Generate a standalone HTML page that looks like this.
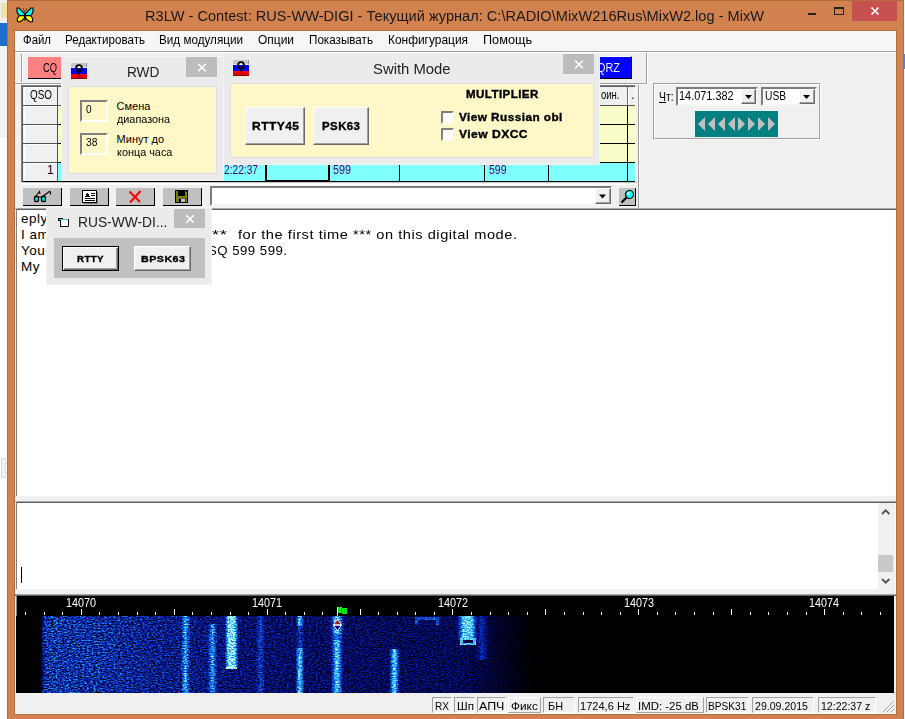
<!DOCTYPE html>
<html><head><meta charset="utf-8">
<style>
*{box-sizing:border-box;margin:0;padding:0}
html,body{width:905px;height:719px;overflow:hidden;background:#fff;font-family:"Liberation Sans",sans-serif;font-size:11px;color:#000}
.a{position:absolute}
.t{position:absolute;white-space:pre;line-height:1}
.btn3d{background:#C0C0C0;border:solid #000;border-width:0 1px 1px 0}
.dlg{background:#EBEBEB;border:1px solid #F3F3F3}
.yel{background:#FEF8C8;box-shadow:0 0 0 1px #DEDEE0}
.xbtn{background:#BCBCBC}
.pbtn{background:#F0F0F0;border:1px solid;border-color:#fff #696969 #696969 #fff;box-shadow:inset -1px -1px 0 #A0A0A0}
.edit{border:2px solid;border-color:#808080 #fff #fff #808080;background:#FEF8C8}
.sb{top:697px;height:16px;border:1px solid;border-color:#A0A0A0 #fff #fff #A0A0A0}
.sbr{top:697px;height:16px;border:1px solid;border-color:#fff #A0A0A0 #A0A0A0 #fff}
.cmb{background:#fff;border:2px solid;border-color:#7C7C7C #F4F4F4 #F4F4F4 #7C7C7C}
.dd{background:#F0F0F0;border:1px solid;border-color:#fff #696969 #696969 #fff;box-shadow:inset -1px -1px 0 #A0A0A0}
</style></head><body>
<div class="a" style="left:0px;top:0px;width:7px;height:719px;background:#fff"></div>
<div class="a" style="left:0px;top:46px;width:7px;height:92px;background:#F1F2F4"></div>
<div class="a" style="left:1px;top:458px;width:5px;height:20px;background:#F2F2F2;border:1px solid #DCDCDC"></div>
<div class="a" style="left:0px;top:0px;width:7px;height:23px;background:#EEF0F2"></div>
<div class="a" style="left:1px;top:3px;width:6px;height:15px;background:#F3E3A0"></div>
<div class="a" style="left:0px;top:23px;width:7px;height:23px;background:#1E6FCB"></div>
<div class="a" style="left:904px;top:0px;width:1px;height:719px;background:#F4F5F9"></div>
<div class="a" style="left:904px;top:54px;width:1px;height:15px;background:#3A8DE0"></div>
<div class="a" style="left:7px;top:0px;width:897px;height:719px;background:#D2824E"></div>
<div class="a" style="left:7px;top:0px;width:897px;height:1px;background:#B26C3E"></div>
<div class="a" style="left:903px;top:0px;width:1px;height:719px;background:#B26C3E"></div>
<div class="a" style="left:7px;top:0px;width:1px;height:719px;background:#B26C3E"></div>
<svg class="a" style="left:16px;top:7px" width="18" height="16"><g stroke="#000" stroke-width="1.100" stroke-linejoin="miter"><path d="M1 1 L3 1 L8.5 6.5 L8.5 8.600 L3.5 8.600 L2 7 L1 5 Z" fill="#00FFFF"/><path d="M17 1 L15 1 L9.5 6.5 L9.5 8.600 L14.5 8.600 L16 7 L17 5 Z" fill="#00FFFF"/><path d="M3.5 8.600 L8.5 8.600 L8.5 10.5 L6 13.5 L3.5 15 L1.5 14.5 L1.300 11.5 Z" fill="#FFFF00"/><path d="M14.5 8.600 L9.5 8.600 L9.5 10.5 L12 13.5 L14.5 15 L16.5 14.5 L16.7 11.5 Z" fill="#FFFF00"/></g><rect x="8.300" y="6" width="1.400" height="7.5" fill="#000"/><rect x="7" y="1.5" width="1" height="1" fill="#000"/><rect x="10" y="1.5" width="1" height="1" fill="#000"/><rect x="8.5" y="3.2" width="1" height="1.300" fill="#000"/></svg>
<div class="t" style="left:145.00px;top:9.00px;font-size:14.7px;color:#1a1a1a;transform:scaleX(0.9931);transform-origin:0 0;">R3LW - Contest: RUS-WW-DIGI - Текущий журнал: C:\RADIO\MixW216Rus\MixW2.log - MixW</div>
<div class="a" style="left:852px;top:1px;width:45px;height:20px;background:#C75050"></div>
<svg class="a" style="left:852px;top:1px" width="45" height="20"><path d="M19.5 6.5 L26.5 13.5 M26.5 6.5 L19.5 13.5" stroke="#fff" stroke-width="1.7" fill="none"/></svg>
<div class="a" style="left:808px;top:13px;width:8px;height:2px;background:#222"></div>
<div class="a" style="left:834px;top:7px;width:10px;height:8px;border:1px solid #222;border-top-width:2px"></div>
<div class="a" style="left:14px;top:30px;width:883px;height:685px;border:1px solid #B46E3E"></div>
<div class="a" style="left:15px;top:31px;width:881px;height:683px;background:#F0F0F0"></div>
<div class="a" style="left:15px;top:713px;width:881px;height:1px;background:#FAFAFA"></div>
<div class="a" style="left:15px;top:31px;width:881px;height:20px;background:#F5F6F7"></div>
<div class="a" style="left:15px;top:51px;width:881px;height:1px;background:#A0A0A0"></div>
<div class="a" style="left:15px;top:52px;width:881px;height:1px;background:#fff"></div>
<div class="t" style="left:22.50px;top:34.00px;font-size:12px;transform:scaleX(0.9487);transform-origin:0 0;">Файл</div>
<div class="t" style="left:65.00px;top:34.00px;font-size:12px;transform:scaleX(0.9649);transform-origin:0 0;">Редактировать</div>
<div class="t" style="left:159.00px;top:34.00px;font-size:12px;transform:scaleX(0.9741);transform-origin:0 0;">Вид модуляции</div>
<div class="t" style="left:258.00px;top:34.00px;font-size:12px;transform:scaleX(0.9965);transform-origin:0 0;">Опции</div>
<div class="t" style="left:309.00px;top:34.00px;font-size:12px;transform:scaleX(0.9713);transform-origin:0 0;">Показывать</div>
<div class="t" style="left:388.00px;top:34.00px;font-size:12px;transform:scaleX(0.9934);transform-origin:0 0;">Конфигурация</div>
<div class="t" style="left:483.00px;top:34.00px;font-size:12px;transform:scaleX(1.0570);transform-origin:0 0;">Помощь</div>
<div class="a" style="left:21px;top:54px;width:1px;height:28px;background:#A0A0A0"></div>
<div class="a" style="left:22px;top:54px;width:1px;height:28px;background:#fff"></div>
<div class="a" style="left:15px;top:83px;width:632px;height:1px;background:#A0A0A0"></div>
<div class="a" style="left:15px;top:84px;width:632px;height:1px;background:#fff"></div>
<div class="a" style="left:646px;top:53px;width:1px;height:31px;background:#A0A0A0"></div>
<div class="a" style="left:647px;top:53px;width:1px;height:31px;background:#fff"></div>
<div class="a" style="left:28px;top:57px;width:40px;height:22px;background:#FF8080;border-bottom:1px solid #000"></div>
<div class="t" style="left:42.70px;top:62.00px;font-size:12.5px;transform:scaleX(0.7467);transform-origin:0 0;">CQ</div>
<div class="a" style="left:590px;top:56px;width:42px;height:23px;background:#0000FF;border:1px solid;border-color:#fff #000 #000 #fff"></div>
<div class="t" style="left:597.00px;top:62.00px;font-size:12.5px;color:#E8E8FF;transform:scaleX(0.8715);transform-origin:0 0;">QRZ</div>
<div class="a" style="left:21px;top:85px;width:615px;height:99px;border:1px solid;border-color:#808080 #fff #fff #808080"></div>
<div class="a" style="left:22px;top:86px;width:613px;height:96px;background:#F8FCC8;border-top:1px solid #606060;border-left:1px solid #606060"></div>
<div class="a" style="left:23px;top:87px;width:612px;height:19px;background:#F0F0F0"></div>
<div class="a" style="left:23px;top:87px;width:35px;height:94px;background:#F0F0F0;border-right:1px solid #505050"></div>
<div class="a" style="left:23px;top:105px;width:612px;height:1px;background:#505050"></div>
<div class="a" style="left:23px;top:124px;width:35px;height:1px;background:#505050"></div>
<div class="a" style="left:58px;top:124px;width:577px;height:1px;background:#000"></div>
<div class="a" style="left:23px;top:143px;width:35px;height:1px;background:#505050"></div>
<div class="a" style="left:58px;top:143px;width:577px;height:1px;background:#000"></div>
<div class="a" style="left:23px;top:162px;width:35px;height:1px;background:#505050"></div>
<div class="a" style="left:58px;top:162px;width:577px;height:1px;background:#000"></div>
<div class="a" style="left:58px;top:163px;width:577px;height:18px;background:#80FFFF"></div>
<div class="a" style="left:23px;top:181px;width:612px;height:1px;background:#000"></div>
<div class="a" style="left:21px;top:182px;width:616px;height:1px;background:#C8C8C8"></div>
<div class="a" style="left:21px;top:183px;width:616px;height:2px;background:#fff"></div>
<div class="a" style="left:24px;top:88px;width:1px;height:17px;background:#fff"></div>
<div class="a" style="left:24px;top:87px;width:33px;height:1px;background:#fff"></div>
<div class="a" style="left:24px;top:106px;width:33px;height:1px;background:#fff"></div>
<div class="a" style="left:24px;top:106px;width:1px;height:18px;background:#fff"></div>
<div class="a" style="left:24px;top:125px;width:33px;height:1px;background:#fff"></div>
<div class="a" style="left:24px;top:125px;width:1px;height:18px;background:#fff"></div>
<div class="a" style="left:24px;top:144px;width:33px;height:1px;background:#fff"></div>
<div class="a" style="left:24px;top:144px;width:1px;height:18px;background:#fff"></div>
<div class="a" style="left:24px;top:163px;width:33px;height:1px;background:#fff"></div>
<div class="a" style="left:24px;top:163px;width:1px;height:18px;background:#fff"></div>
<div class="t" style="left:30.30px;top:89.00px;font-size:12px;transform:scaleX(0.8248);transform-origin:0 0;">QSO</div>
<div class="t" style="left:47.00px;top:164.00px;font-size:12px;">1</div>
<div class="a" style="left:627px;top:87px;width:1px;height:19px;background:#707070"></div>
<div class="a" style="left:627px;top:106px;width:1px;height:75px;background:#000"></div>
<div class="a" style="left:628px;top:87px;width:1px;height:18px;background:#fff"></div>
<div class="a" style="left:265px;top:163px;width:2px;height:19px;background:#000"></div>
<div class="a" style="left:328px;top:163px;width:2px;height:19px;background:#000"></div>
<div class="a" style="left:265px;top:180px;width:65px;height:2px;background:#000"></div>
<div class="a" style="left:399px;top:163px;width:1px;height:18px;background:#000"></div>
<div class="a" style="left:484px;top:163px;width:1px;height:18px;background:#000"></div>
<div class="a" style="left:548px;top:163px;width:1px;height:18px;background:#000"></div>
<div class="t" style="left:224.00px;top:164.00px;font-size:12px;color:#4B0082;transform:scaleX(0.8490);transform-origin:0 0;">2:22:37</div>
<div class="t" style="left:333.40px;top:164.00px;font-size:12px;color:#4B0082;transform:scaleX(0.8986);transform-origin:0 0;">599</div>
<div class="t" style="left:488.80px;top:164.00px;font-size:12px;color:#4B0082;transform:scaleX(0.8736);transform-origin:0 0;">599</div>
<div class="t" style="left:601.00px;top:89.00px;font-size:12px;transform:scaleX(0.7925);transform-origin:0 0;">оин.</div>
<div class="t" style="left:631.00px;top:89.00px;font-size:12px;">.</div>
<div class="a" style="left:638px;top:85px;width:1px;height:123px;background:#A0A0A0"></div>
<div class="a" style="left:639px;top:85px;width:1px;height:123px;background:#fff"></div>
<div class="a btn3d" style="left:23px;top:188px;width:39px;height:18px;"></div>
<div class="a btn3d" style="left:70px;top:188px;width:39px;height:18px;"></div>
<div class="a btn3d" style="left:116px;top:188px;width:39px;height:18px;"></div>
<div class="a btn3d" style="left:163px;top:188px;width:39px;height:18px;"></div>
<svg class="a" style="left:33px;top:190px" width="20" height="13"><path d="M2.5 6.5 L6.5 1.5 L7 4 M9.5 6.5 L16.5 1.5 L17.5 2 L17.5 4.5" stroke="#000" fill="none" stroke-width="1.100"/><rect x="1.5" y="6.5" width="4" height="5" rx="1.2" fill="#00E8E8" stroke="#000" stroke-width="1.300"/><rect x="8.5" y="6.5" width="4" height="5" rx="1.2" fill="#00E8E8" stroke="#000" stroke-width="1.300"/><path d="M5.5 7h3" stroke="#000"/></svg>
<svg class="a" style="left:82px;top:190px" width="17" height="14" shape-rendering="crispEdges"><rect x="0.5" y="0.5" width="14" height="12" fill="#fff" stroke="#000"/><path d="M15.5 2v12M2 13.5h14" stroke="#808080"/><path d="M9 3.5h4M9 5.5h4M3 8.5h10M3 10.5h10" stroke="#000"/><path d="M3 7l2.5-4.5 2.5 4.5z" fill="#000"/></svg>
<svg class="a" style="left:128px;top:190px" width="15" height="14"><path d="M1.5 1.5 L12 12 M12.5 1 L8 6 L2 12.5" stroke="#FF0000" stroke-width="2" fill="none"/></svg>
<svg class="a" style="left:175px;top:190px" width="14" height="14" shape-rendering="crispEdges"><rect x="0.5" y="0.5" width="12" height="12" fill="#808000" stroke="#000"/><rect x="3" y="1" width="7" height="5" fill="#000"/><rect x="3" y="8" width="7" height="4" fill="#C0C0C0" stroke="#000" stroke-width=".5"/><rect x="4" y="9" width="2" height="3" fill="#000"/><rect x="11" y="1" width="1" height="1" fill="#000"/></svg>
<div class="a cmb" style="left:210px;top:186px;width:402px;height:20px;"></div>
<div class="a dd" style="left:595px;top:188px;width:16px;height:16px;"></div>
<svg class="a" style="left:595px;top:188px" width="16" height="16"><path d="M4 6.5 h7 l-3.5 4z" fill="#000"/></svg>
<div class="a btn3d" style="left:619px;top:188px;width:17px;height:18px;"></div>
<svg class="a" style="left:620px;top:189px" width="15" height="16"><circle cx="9.5" cy="5.5" r="4" fill="#00FFFF" stroke="#000" stroke-width="1.2"/><circle cx="8.5" cy="4.5" r="1.5" fill="#C0FFFF"/><path d="M6.5 8.5 L1.5 13.5" stroke="#000" stroke-width="2.2"/></svg>
<div class="a" style="left:15px;top:208px;width:881px;height:1px;background:#A8A8A8"></div>
<div class="a dlg" style="left:61px;top:56px;width:163px;height:125px;"></div>
<svg class="a" style="left:71px;top:63px" width="16" height="16"><g shape-rendering="crispEdges"><rect width="16" height="5" fill="#C6C6C6"/><rect x="15" width="1" height="4" fill="#909090"/><rect y="4" width="16" height="1" fill="#E4E4D0"/><rect y="5" width="16" height="6" fill="#0000FF"/><rect y="11" width="16" height="5" fill="#FF0000"/><rect y="15" width="16" height="1" fill="#800000"/></g><ellipse cx="8" cy="3.8" rx="1.7" ry="1" fill="#fff"/><circle cx="8" cy="5" r="2.900" fill="none" stroke="#000" stroke-width="1.900"/><path d="M4.7 6.5 Q8 10.5 11.300 6.5 L11 8 L9 9.300 L9 11.5 L7 11.5 L7 9.300 L5 8 Z" fill="#000"/><g fill="#300"><rect x="5" y="13" width="1" height="1"/><rect x="7.5" y="13" width="1.5" height="1"/><rect x="10.5" y="13" width="1" height="1"/></g><path d="M4 12l3 3M7 12l-3 3M9.5 12l3 3M12.5 12l-3 3" stroke="#A00000" stroke-width=".7"/></svg>
<div class="t" style="left:126.60px;top:64.00px;font-size:15px;color:#222;transform:scaleX(0.9111);transform-origin:0 0;">RWD</div>
<div class="a xbtn" style="left:186px;top:57px;width:31px;height:20px;"></div>
<svg class="a" style="left:0;top:0" width="905" height="300"><path d="M198.2 63.7 l7.600 7.600 m0 -7.600 l-7.600 7.600" stroke="#fff" stroke-width="1.600" fill="none"/></svg>
<div class="a yel" style="left:69px;top:87px;width:147px;height:86px;"></div>
<div class="a edit" style="left:80px;top:100px;width:28px;height:22px;"></div>
<div class="a edit" style="left:80px;top:133px;width:28px;height:22px;"></div>
<div class="t" style="left:85.60px;top:105.00px;font-size:10px;transform:scaleX(1.0067);transform-origin:0 0;">0</div>
<div class="t" style="left:85.60px;top:138.00px;font-size:10px;transform:scaleX(1.0247);transform-origin:0 0;">38</div>
<div class="t" style="left:116.60px;top:101.00px;font-size:11px;">Смена</div>
<div class="t" style="left:116.60px;top:114.00px;font-size:11px;transform:scaleX(0.9838);transform-origin:0 0;">диапазона</div>
<div class="t" style="left:116.60px;top:134.00px;font-size:11px;">Минут до</div>
<div class="t" style="left:116.60px;top:147.00px;font-size:11px;transform:scaleX(0.9879);transform-origin:0 0;">конца часа</div>
<div class="a dlg" style="left:223px;top:53px;width:377px;height:112px;"></div>
<svg class="a" style="left:233px;top:60px" width="16" height="16"><g shape-rendering="crispEdges"><rect width="16" height="5" fill="#C6C6C6"/><rect x="15" width="1" height="4" fill="#909090"/><rect y="4" width="16" height="1" fill="#E4E4D0"/><rect y="5" width="16" height="6" fill="#0000FF"/><rect y="11" width="16" height="5" fill="#FF0000"/><rect y="15" width="16" height="1" fill="#800000"/></g><ellipse cx="8" cy="3.8" rx="1.7" ry="1" fill="#fff"/><circle cx="8" cy="5" r="2.900" fill="none" stroke="#000" stroke-width="1.900"/><path d="M4.7 6.5 Q8 10.5 11.300 6.5 L11 8 L9 9.300 L9 11.5 L7 11.5 L7 9.300 L5 8 Z" fill="#000"/><g fill="#300"><rect x="5" y="13" width="1" height="1"/><rect x="7.5" y="13" width="1.5" height="1"/><rect x="10.5" y="13" width="1" height="1"/></g><path d="M4 12l3 3M7 12l-3 3M9.5 12l3 3M12.5 12l-3 3" stroke="#A00000" stroke-width=".7"/></svg>
<div class="t" style="left:373.00px;top:61.00px;font-size:15px;color:#222;transform:scaleX(0.9901);transform-origin:0 0;">Swith Mode</div>
<div class="a xbtn" style="left:563px;top:54px;width:31px;height:20px;"></div>
<svg class="a" style="left:0;top:0" width="905" height="300"><path d="M575.2 60.7 l7.600 7.600 m0 -7.600 l-7.600 7.600" stroke="#fff" stroke-width="1.600" fill="none"/></svg>
<div class="a yel" style="left:231px;top:84px;width:362px;height:73px;"></div>
<div class="a pbtn" style="left:245px;top:107px;width:60px;height:38px;"></div>
<div class="a pbtn" style="left:313px;top:107px;width:56px;height:38px;"></div>
<div class="t" style="left:251.60px;top:121.00px;font-size:10.5px;font-weight:700;letter-spacing:0.4px;transform:scaleX(1.1436);transform-origin:0 0;-webkit-text-stroke:.35px #000;">RTTY45</div>
<div class="t" style="left:321.70px;top:121.00px;font-size:10.5px;font-weight:700;letter-spacing:0.4px;transform:scaleX(1.0894);transform-origin:0 0;-webkit-text-stroke:.35px #000;">PSK63</div>
<div class="t" style="left:465.70px;top:89.00px;font-size:10.5px;font-weight:700;letter-spacing:0.4px;transform:scaleX(1.0985);transform-origin:0 0;-webkit-text-stroke:.35px #000;">MULTIPLIER</div>
<div class="a" style="left:441px;top:111px;width:13px;height:13px;background:#fff;border:2px solid;border-color:#808080 #FAFAF4 #FAFAF4 #808080"></div>
<div class="a" style="left:441px;top:128px;width:13px;height:13px;background:#fff;border:2px solid;border-color:#808080 #FAFAF4 #FAFAF4 #808080"></div>
<div class="t" style="left:459.40px;top:112.00px;font-size:10.5px;font-weight:700;letter-spacing:0.4px;transform:scaleX(1.1207);transform-origin:0 0;-webkit-text-stroke:.35px #000;">View Russian obl</div>
<div class="t" style="left:459.40px;top:129.00px;font-size:10.5px;font-weight:700;letter-spacing:0.4px;transform:scaleX(1.1507);transform-origin:0 0;-webkit-text-stroke:.35px #000;">View DXCC</div>
<div class="a" style="left:653px;top:83px;width:168px;height:57px;border:1px solid;border-color:#A0A0A0 #fff #fff #A0A0A0"></div>
<div class="a" style="left:654px;top:84px;width:166px;height:55px;border:1px solid;border-color:#fff #A0A0A0 #A0A0A0 #fff"></div>
<div class="t" style="left:658.60px;top:91.00px;font-size:12px;transform:scaleX(0.8668);transform-origin:0 0;"><u>Ч</u>т:</div>
<div class="a cmb" style="left:676px;top:87px;width:82px;height:19px;"></div>
<div class="t" style="left:679.30px;top:90.00px;font-size:12.5px;transform:scaleX(0.8727);transform-origin:0 0;">14.071.382</div>
<div class="a dd" style="left:741px;top:89px;width:15px;height:15px;"></div>
<svg class="a" style="left:741px;top:89px" width="15" height="15"><path d="M4 6 h7 l-3.5 4z" fill="#000"/></svg>
<div class="a cmb" style="left:761px;top:87px;width:56px;height:19px;"></div>
<div class="t" style="left:765.30px;top:90.00px;font-size:12.5px;transform:scaleX(0.8170);transform-origin:0 0;">USB</div>
<div class="a dd" style="left:799px;top:89px;width:16px;height:15px;"></div>
<svg class="a" style="left:799px;top:89px" width="16" height="15"><path d="M4 6 h7 l-3.5 4z" fill="#000"/></svg>
<div class="a" style="left:695px;top:111px;width:83px;height:26px;background:#008080"></div>
<svg class="a" style="left:695px;top:111px" width="83" height="26"><g fill="#C0C0C0"><path d="M10 6v14l-7-7z"/><path d="M20 6v14l-7-7z"/><path d="M30 6v14l-7-7z"/><path d="M40 6v14l-7-7z"/><path d="M43 6v14l7-7z"/><path d="M53 6v14l7-7z"/><path d="M63 6v14l7-7z"/><path d="M73 6v14l7-7z"/></g></svg>
<div class="a" style="left:15px;top:209px;width:881px;height:287px;background:#fff;border-top:1px solid #606060"></div>
<div class="a" style="left:15px;top:209px;width:1px;height:287px;background:#F4F4F4"></div>
<div class="a" style="left:16px;top:209px;width:1px;height:287px;background:#808080"></div>
<div class="t" style="left:21.00px;top:212.00px;font-size:13.5px;letter-spacing:0.5px;">eply</div>
<div class="t" style="left:21.00px;top:228.00px;font-size:13.5px;letter-spacing:0.5px;">I am</div>
<div class="t" style="left:21.00px;top:244.00px;font-size:13.5px;letter-spacing:0.5px;">You</div>
<div class="t" style="left:21.00px;top:260.00px;font-size:13.5px;letter-spacing:0.5px;">My</div>
<div class="t" style="left:211.50px;top:228.00px;font-size:13.5px;letter-spacing:0.5px;transform:scaleX(1.3617);transform-origin:0 0;">**</div>
<div class="t" style="left:238.00px;top:228.00px;font-size:13.5px;letter-spacing:0.5px;transform:scaleX(1.0820);transform-origin:0 0;">for the first time *** on this digital mode.</div>
<div class="t" style="left:208.00px;top:244.00px;font-size:13.5px;letter-spacing:0.5px;transform:scaleX(0.9776);transform-origin:0 0;">SQ 599 599.</div>
<div class="a dlg" style="left:46px;top:207px;width:166px;height:78px;"></div>
<svg class="a" style="left:57px;top:216px" width="14" height="13" shape-rendering="crispEdges"><path d="M1.5 2.5h4v1h6v7h-8v-6h-2z" fill="#fff" stroke="#111" stroke-width="1"/><rect x="2" y="3" width="9" height="1" fill="#30C8E8"/><path d="M11 9l2 1-2 1z" fill="#333"/></svg>
<div class="t" style="left:77.70px;top:214.00px;font-size:15px;color:#222;transform:scaleX(0.9196);transform-origin:0 0;">RUS-WW-DI...</div>
<div class="a xbtn" style="left:174px;top:209px;width:31px;height:19px;"></div>
<svg class="a" style="left:0;top:0" width="905" height="300"><path d="M186.2 215.2 l7.600 7.600 m0 -7.600 l-7.600 7.600" stroke="#fff" stroke-width="1.600" fill="none"/></svg>
<div class="a" style="left:54px;top:238px;width:151px;height:40px;background:#C0C0C0"></div>
<div class="a pbtn" style="left:62px;top:246px;width:57px;height:25px;border:1px solid #000;box-shadow:inset 1px 1px 0 #fff,inset -1px -1px 0 #696969,inset -2px -2px 0 #A0A0A0"></div>
<div class="a pbtn" style="left:134px;top:246px;width:57px;height:25px;"></div>
<div class="t" style="left:76.70px;top:254.00px;font-size:9.5px;font-weight:700;letter-spacing:0.4px;transform:scaleX(1.0190);transform-origin:0 0;-webkit-text-stroke:.35px #000;">RTTY</div>
<div class="t" style="left:140.70px;top:254.00px;font-size:9.5px;font-weight:700;letter-spacing:0.4px;transform:scaleX(1.1289);transform-origin:0 0;-webkit-text-stroke:.35px #000;">BPSK63</div>
<div class="a" style="left:15px;top:501px;width:881px;height:1px;background:#A8A8A8"></div>
<div class="a" style="left:15px;top:502px;width:881px;height:87px;background:#fff;border-top:1px solid #606060"></div>
<div class="a" style="left:15px;top:502px;width:1px;height:87px;background:#F4F4F4"></div>
<div class="a" style="left:16px;top:502px;width:1px;height:87px;background:#808080"></div>
<div class="a" style="left:21px;top:567px;width:1px;height:16px;background:#000"></div>
<div class="a" style="left:878px;top:503px;width:17px;height:86px;background:#F0F0F0"></div>
<div class="a" style="left:878px;top:555px;width:15px;height:17px;background:#C9C9C9"></div>
<svg class="a" style="left:878px;top:503px" width="17" height="86"><path d="M4 11l3.7-3.7 3.7 3.7M4 76l3.7 3.7 3.7-3.7" stroke="#555" stroke-width="1.900" fill="none"/></svg>
<div class="a" style="left:15px;top:594px;width:881px;height:1px;background:#A8A8A8"></div>
<div class="a" style="left:15px;top:595px;width:881px;height:1px;background:#606060"></div>
<div class="a" style="left:16px;top:595px;width:1px;height:98px;background:#808890"></div>
<div class="a" style="left:17px;top:596px;width:877px;height:97px;background:#000"></div>
<svg class="a" style="left:16px;top:595px" width="878" height="98">
<defs>
<filter id="nz" x="0" y="0" width="100%" height="100%" color-interpolation-filters="sRGB">
<feTurbulence type="fractalNoise" baseFrequency="0.45 0.75" numOctaves="2" seed="11" result="t"/>
<feColorMatrix in="t" type="matrix" values="2.1 0 0 0 -0.55  2.1 0 0 0 -0.55  2.1 0 0 0 -0.55  0 0 0 0 1" result="n"/>
<feColorMatrix in="SourceGraphic" type="matrix" values="1 0 0 0 0  1 0 0 0 0  1 0 0 0 0  0 0 0 0 1" result="E"/>
<feColorMatrix in="SourceGraphic" type="matrix" values="0 1 0 0 0  0 1 0 0 0  0 1 0 0 0  0 0 0 0 1" result="G"/>
<feComposite in="E" in2="G" operator="arithmetic" k1="0" k2="1" k3="0.25" k4="0" result="c1"/>
<feComposite in="n" in2="c1" operator="arithmetic" k1="1" k2="0" k3="0" k4="0" result="c2"/>
<feComposite in="c2" in2="G" operator="arithmetic" k1="0" k2="1" k3="0.72" k4="0" result="c3"/>
<feComponentTransfer in="c3"><feFuncR type="table" tableValues="0 0 0.015 0.05 0.125 0.44 0.8"/><feFuncG type="table" tableValues="0 0.03 0.16 0.35 0.63 0.88 1"/><feFuncB type="table" tableValues="0 0.4 0.69 0.85 0.94 1 1"/><feFuncA type="linear" slope="0" intercept="1"/></feComponentTransfer>
</filter>
<linearGradient id="env" x1="0" x2="1">
<stop offset="0" stop-color="rgb(110,0,0)"/><stop offset="0.008" stop-color="rgb(176,0,0)"/><stop offset="0.108" stop-color="rgb(165,0,0)"/><stop offset="0.216" stop-color="rgb(135,0,0)"/><stop offset="0.346" stop-color="rgb(108,0,0)"/><stop offset="0.45" stop-color="rgb(92,0,0)"/><stop offset="0.594" stop-color="rgb(82,0,0)"/><stop offset="0.836" stop-color="rgb(72,0,0)"/><stop offset="0.886" stop-color="rgb(50,0,0)"/><stop offset="0.936" stop-color="rgb(22,0,0)"/><stop offset="0.972" stop-color="rgb(6,0,0)"/><stop offset="1" stop-color="rgb(0,0,0)"/>

<linearGradient id="s1" x1="0" x2="1"><stop offset="0" stop-color="rgb(0,0,0)"/><stop offset="0.50" stop-color="rgb(0,140,0)"/><stop offset="0.50" stop-color="rgb(0,140,0)"/><stop offset="1" stop-color="rgb(0,0,0)"/></linearGradient><linearGradient id="s2" x1="0" x2="1"><stop offset="0" stop-color="rgb(0,0,0)"/><stop offset="0.28" stop-color="rgb(0,200,0)"/><stop offset="0.72" stop-color="rgb(0,200,0)"/><stop offset="1" stop-color="rgb(0,0,0)"/></linearGradient><linearGradient id="s3" x1="0" x2="1"><stop offset="0" stop-color="rgb(0,0,0)"/><stop offset="0.50" stop-color="rgb(0,70,0)"/><stop offset="0.50" stop-color="rgb(0,70,0)"/><stop offset="1" stop-color="rgb(0,0,0)"/></linearGradient><linearGradient id="s4" x1="0" x2="1"><stop offset="0" stop-color="rgb(0,0,0)"/><stop offset="0.40" stop-color="rgb(0,178,0)"/><stop offset="0.60" stop-color="rgb(0,178,0)"/><stop offset="1" stop-color="rgb(0,0,0)"/></linearGradient>
</defs>
<g filter="url(#nz)">
<rect x="0" y="21" width="878" height="77" fill="#000"/>
<rect x="26" y="21" width="500" height="77" fill="url(#env)"/>
<rect x="164.5" y="21" width="10.0" height="77" fill="url(#s1)" style="mix-blend-mode:lighten"/>
<rect x="191.5" y="29" width="10.0" height="69" fill="url(#s1)" style="mix-blend-mode:lighten"/>
<rect x="208.5" y="21" width="14.0" height="53" fill="url(#s2)" style="mix-blend-mode:lighten"/>
<rect x="240.0" y="21" width="9.0" height="77" fill="url(#s3)" style="mix-blend-mode:lighten"/>
<rect x="280.0" y="21" width="8.0" height="10" fill="url(#s4)" style="mix-blend-mode:lighten"/>
<rect x="279.5" y="53" width="9.0" height="45" fill="url(#s4)" style="mix-blend-mode:lighten"/>
<rect x="280.0" y="31" width="8.0" height="22" fill="url(#s3)" style="mix-blend-mode:lighten"/>
<rect x="314.5" y="21" width="13.0" height="77" fill="url(#s1)" style="mix-blend-mode:lighten"/>
<rect x="314.0" y="21" width="14.0" height="18" fill="url(#s4)" style="mix-blend-mode:lighten"/>
<rect x="315.0" y="45" width="12.0" height="53" fill="url(#s4)" style="mix-blend-mode:lighten"/>
<rect x="373.0" y="54" width="11.0" height="44" fill="url(#s4)" style="mix-blend-mode:lighten"/>
<rect x="441.5" y="21" width="20.0" height="24" fill="url(#s2)" style="mix-blend-mode:lighten"/>
<rect x="459.0" y="21" width="14.0" height="44" fill="url(#s3)" style="mix-blend-mode:lighten"/>
<path d="M415 617v8h3v-5h18v5h3v-8z" fill="rgb(0,90,0)" style="mix-blend-mode:lighten" transform="translate(-16,-595)"/>
<path d="M460 638h16v7h-16z M463 640v3h10v-3z" fill="rgb(0,200,0)" fill-rule="evenodd" style="mix-blend-mode:lighten" transform="translate(-16,-595)"/>
<path d="M226 667h4v-4h3v4h4v2h-11z" fill="rgb(0,255,0)" style="mix-blend-mode:lighten" transform="translate(-16,-595)"/>
</g>
<rect x="0" y="21" width="26" height="77" fill="#000"/>
<g fill="#fff" shape-rendering="crispEdges">
<rect x="9" y="17" width="1" height="3"/>
<rect x="28" y="17" width="1" height="3"/>
<rect x="46" y="17" width="1" height="3"/>
<rect x="65" y="14" width="1" height="6"/>
<rect x="83" y="17" width="1" height="3"/>
<rect x="102" y="17" width="1" height="3"/>
<rect x="121" y="17" width="1" height="3"/>
<rect x="139" y="17" width="1" height="3"/>
<rect x="158" y="14" width="1" height="6"/>
<rect x="176" y="17" width="1" height="3"/>
<rect x="195" y="17" width="1" height="3"/>
<rect x="214" y="17" width="1" height="3"/>
<rect x="232" y="17" width="1" height="3"/>
<rect x="251" y="14" width="1" height="6"/>
<rect x="269" y="17" width="1" height="3"/>
<rect x="288" y="17" width="1" height="3"/>
<rect x="306" y="17" width="1" height="3"/>
<rect x="344" y="14" width="1" height="6"/>
<rect x="362" y="17" width="1" height="3"/>
<rect x="381" y="17" width="1" height="3"/>
<rect x="399" y="17" width="1" height="3"/>
<rect x="418" y="17" width="1" height="3"/>
<rect x="436" y="14" width="1" height="6"/>
<rect x="455" y="17" width="1" height="3"/>
<rect x="474" y="17" width="1" height="3"/>
<rect x="492" y="17" width="1" height="3"/>
<rect x="511" y="17" width="1" height="3"/>
<rect x="529" y="14" width="1" height="6"/>
<rect x="548" y="17" width="1" height="3"/>
<rect x="567" y="17" width="1" height="3"/>
<rect x="585" y="17" width="1" height="3"/>
<rect x="604" y="17" width="1" height="3"/>
<rect x="622" y="14" width="1" height="6"/>
<rect x="641" y="17" width="1" height="3"/>
<rect x="659" y="17" width="1" height="3"/>
<rect x="678" y="17" width="1" height="3"/>
<rect x="697" y="17" width="1" height="3"/>
<rect x="715" y="14" width="1" height="6"/>
<rect x="734" y="17" width="1" height="3"/>
<rect x="752" y="17" width="1" height="3"/>
<rect x="771" y="17" width="1" height="3"/>
<rect x="790" y="17" width="1" height="3"/>
<rect x="808" y="14" width="1" height="6"/>
<rect x="827" y="17" width="1" height="3"/>
<rect x="845" y="17" width="1" height="3"/>
<rect x="864" y="17" width="1" height="3"/>
</g>
<g shape-rendering="crispEdges"><rect x="321" y="12" width="1" height="9" fill="#FFFF00"/><path d="M322 12h4v1h5v6h-5v-1h-4z" fill="#00F000"/><path d="M325 13h1v5h-1zM328 14h1v4h-1z" fill="#00B000"/></g>
<path d="M321.5 23.5l4.5 6.5-4.5 6.5-4.5-6.5z" fill="#fff"/><path d="M321.5 25l2.600 3.300 0 1h-5.2l0-1z" fill="#A02020"/><path d="M321.5 35l2.600-3.300 0-1h-5.2l0 1z" fill="#00008C"/>
</svg>
<div class="t" style="left:66.30px;top:597.00px;font-size:12.5px;color:#fff;transform:scaleX(0.8629);transform-origin:0 0;">14070</div>
<div class="t" style="left:252.00px;top:597.00px;font-size:12.5px;color:#fff;transform:scaleX(0.8629);transform-origin:0 0;">14071</div>
<div class="t" style="left:437.80px;top:597.00px;font-size:12.5px;color:#fff;transform:scaleX(0.8629);transform-origin:0 0;">14072</div>
<div class="t" style="left:623.60px;top:597.00px;font-size:12.5px;color:#fff;transform:scaleX(0.8629);transform-origin:0 0;">14073</div>
<div class="t" style="left:809.40px;top:597.00px;font-size:12.5px;color:#fff;transform:scaleX(0.8629);transform-origin:0 0;">14074</div>
<div class="a sb" style="left:432px;top:697px;width:20px;height:16px;"></div>
<div class="t" style="left:434.60px;top:701.00px;font-size:11.5px;transform:scaleX(0.8759);transform-origin:0 0;">RX</div>
<div class="a sb" style="left:454px;top:697px;width:21px;height:16px;"></div>
<div class="t" style="left:456.60px;top:701.00px;font-size:11.5px;transform:scaleX(1.0130);transform-origin:0 0;">Шп</div>
<div class="a" style="left:475px;top:698px;width:3px;height:14px;background:#F0F0F0"></div>
<div class="a sb" style="left:477px;top:697px;width:29px;height:16px;"></div>
<div class="t" style="left:478.90px;top:701.00px;font-size:11.5px;transform:scaleX(1.0816);transform-origin:0 0;">АПЧ</div>
<div class="a sbr" style="left:508px;top:697px;width:33px;height:16px;"></div>
<div class="t" style="left:510.70px;top:701.00px;font-size:11.5px;transform:scaleX(1.0277);transform-origin:0 0;">Фикс</div>
<div class="a sb" style="left:543px;top:697px;width:32px;height:16px;"></div>
<div class="t" style="left:548.00px;top:701.00px;font-size:11.5px;transform:scaleX(0.9458);transform-origin:0 0;">БН</div>
<div class="a sb" style="left:578px;top:697px;width:56px;height:16px;"></div>
<div class="t" style="left:580.40px;top:701.00px;font-size:11.5px;transform:scaleX(0.9611);transform-origin:0 0;">1724,6 Hz</div>
<div class="a sbr" style="left:636px;top:697px;width:68px;height:16px;"></div>
<div class="t" style="left:638.30px;top:701.00px;font-size:11.5px;transform:scaleX(0.9941);transform-origin:0 0;">IMD: -25 dB</div>
<div class="a sb" style="left:706px;top:697px;width:43px;height:16px;"></div>
<div class="t" style="left:708.20px;top:701.00px;font-size:11.5px;transform:scaleX(0.8808);transform-origin:0 0;">BPSK31</div>
<div class="a sb" style="left:752px;top:697px;width:62px;height:16px;"></div>
<div class="t" style="left:755.30px;top:701.00px;font-size:11.5px;transform:scaleX(0.9207);transform-origin:0 0;">29.09.2015</div>
<div class="a sb" style="left:818px;top:697px;width:58px;height:16px;"></div>
<div class="t" style="left:820.90px;top:701.00px;font-size:11.5px;transform:scaleX(0.9177);transform-origin:0 0;">12:22:37 z</div>
<svg class="a" style="left:881px;top:699px" width="14" height="14"><path d="M13 2L2 13M13 6L6 13M13 10L10 13" stroke="#A0A0A0" stroke-width="1"/><path d="M13 3L3 13M13 7L7 13M13 11L11 13" stroke="#fff" stroke-width="1"/></svg>
</body></html>
